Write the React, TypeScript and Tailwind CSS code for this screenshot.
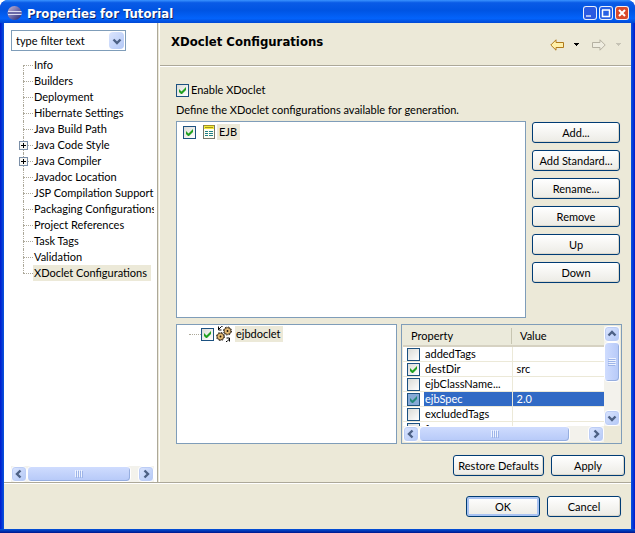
import { useState, type ReactNode } from "react";
import { clsx } from "clsx";

interface TreeItem {
  label: string;
  expandable?: boolean;
}

interface Property {
  name: string;
  value: string;
  enabled: boolean;
}

const PAGES: TreeItem[] = [
  { label: "Info" },
  { label: "Builders" },
  { label: "Deployment" },
  { label: "Hibernate Settings" },
  { label: "Java Build Path" },
  { label: "Java Code Style", expandable: true },
  { label: "Java Compiler", expandable: true },
  { label: "Javadoc Location" },
  { label: "JSP Compilation Support" },
  { label: "Packaging Configurations" },
  { label: "Project References" },
  { label: "Task Tags" },
  { label: "Validation" },
  { label: "XDoclet Configurations" },
];

const PROPERTIES: Property[] = [
  { name: "addedTags", value: "", enabled: false },
  { name: "destDir", value: "src", enabled: true },
  { name: "ejbClassName...", value: "", enabled: false },
  { name: "ejbSpec", value: "2.0", enabled: true },
  { name: "excludedTags", value: "", enabled: false },
  { name: "force", value: "", enabled: false },
];

const ACTIONS = ["Add...", "Add Standard...", "Rename...", "Remove", "Up", "Down"];

function EclipseIcon() {
  return (
    <svg width="16" height="16" viewBox="0 0 16 16" aria-hidden="true">
      <defs>
        <linearGradient id="globe" x1="0" y1="0" x2="1" y2="1">
          <stop offset="0" stopColor="#c9b9d0" />
          <stop offset="0.45" stopColor="#7775b4" />
          <stop offset="1" stopColor="#26276e" />
        </linearGradient>
      </defs>
      <circle cx="7.5" cy="8" r="7" fill="url(#globe)" />
      <path d="M1 6.500h13.500M1 9.500h13.500" stroke="#dcdcf2" />
      <path d="M1 8h14" stroke="#6a69a8" strokeWidth="2" />
    </svg>
  );
}

function Chevron({ dir }: { dir: "up" | "down" | "left" | "right" }) {
  const paths = {
    up: "M1.5 6.5L5 3L8.5 6.5",
    down: "M1.5 3.5L5 7L8.5 3.5",
    left: "M6.5 1.5L3 5L6.5 8.5",
    right: "M3.5 1.5L7 5L3.5 8.5",
  };
  return (
    <svg width="10" height="10" viewBox="0 0 10 10" aria-hidden="true">
      <path d={paths[dir]} fill="none" stroke="#4d6185" strokeWidth="2.4" />
    </svg>
  );
}

function ScrollBar({ vertical, thumb }: { vertical?: boolean; thumb: string }) {
  const arrow =
    "flex size-4 shrink-0 items-center justify-center rounded-sm border border-white bg-gradient-to-br from-[#dbe5fe] to-[#b3c8f6] shadow-[inset_0_0_0_1px_#bccdf5]";
  return (
    <div className={clsx("flex bg-[#f3f2ec]", vertical ? "w-4 flex-col" : "h-4")}>
      <button type="button" aria-label={vertical ? "Scroll up" : "Scroll left"} className={arrow}>
        <Chevron dir={vertical ? "up" : "left"} />
      </button>
      <div className="min-h-0 min-w-0 flex-1">
        <div
          className={clsx(
            "flex items-center justify-center rounded-sm border border-white from-[#cfdcfe] to-[#b6c9f8] shadow-[inset_-1px_-1px_0_#96aedf]",
            vertical ? "w-4 bg-gradient-to-r" : "h-4 bg-gradient-to-b",
            thumb,
          )}
        >
          <svg width="8" height="8" viewBox="0 0 8 8" aria-hidden="true" className={clsx(vertical && "rotate-90")}>
            <path d="M.5 0v7M2.5 0v7M4.5 0v7M6.5 0v7" stroke="#eef3ff" />
            <path d="M1.5 1v7M3.5 1v7M5.5 1v7M7.5 1v7" stroke="#9db4e8" />
          </svg>
        </div>
      </div>
      <button type="button" aria-label={vertical ? "Scroll down" : "Scroll right"} className={arrow}>
        <Chevron dir={vertical ? "down" : "right"} />
      </button>
    </div>
  );
}

function CheckBox({ label, checked, dimmed }: { label: string; checked?: boolean; dimmed?: boolean }) {
  return (
    <span className="grid size-[13px] shrink-0">
      <input
        type="checkbox"
        aria-label={label}
        defaultChecked={checked}
        className={clsx(
          "peer col-start-1 row-start-1 size-[13px] appearance-none border border-[#1c5180]",
          dimmed ? "bg-[#85a9d6]" : "bg-gradient-to-br from-[#dcdcd7] to-white",
        )}
      />
      <svg
        viewBox="0 0 13 13"
        aria-hidden="true"
        className="pointer-events-none col-start-1 row-start-1 hidden size-[13px] peer-checked:block"
      >
        <path d="M3 5v3l2 2h1l4-4V3L5.5 7.500z" fill={dimmed ? "#25887a" : "#21a121"} />
      </svg>
    </span>
  );
}

function PushButton({ children, primary, className }: { children: ReactNode; primary?: boolean; className?: string }) {
  return (
    <button
      type="button"
      className={clsx(
        "h-[21px] rounded-[3px] border border-[#003c74] bg-gradient-to-b from-white to-[#ecebe5] text-center whitespace-nowrap",
        primary
          ? "shadow-[inset_0_0_0_2px_#a9c3f2]"
          : "shadow-[inset_-1px_-1px_0_#dcd8cc,0_0_0_1px_#e8e5d9]",
        className,
      )}
    >
      {children}
    </button>
  );
}

function DocumentIcon() {
  return (
    <svg width="12" height="14" viewBox="0 0 12 14" shapeRendering="crispEdges" aria-hidden="true">
      <rect width="12" height="14" fill="#77786a" />
      <rect x="1" y="1" width="10" height="12" fill="#fffef2" />
      <rect x="1" y="0" width="10" height="4" fill="#f4ea3c" />
      <path d="M1 .5h10M2 2.500h8" stroke="#a39322" />
      <path d="M2 6.500h3M6 6.500h4M2 8.500h3M6 8.500h4M2 10.500h3M6 10.500h4" stroke="#1f7f86" />
    </svg>
  );
}

function GearsIcon() {
  return (
    <svg width="16" height="16" viewBox="0 0 16 16" aria-hidden="true">
      <g stroke="#1b1208">
        <circle cx="11.5" cy="5" r="4" fill="none" strokeDasharray="1.600 1.540" />
        <circle cx="11.5" cy="5" r="3.400" fill="#e3b871" strokeWidth=".7" />
        <circle cx="4.500" cy="10.500" r="4" fill="none" strokeDasharray="1.600 1.540" />
        <circle cx="4.500" cy="10.500" r="3.400" fill="#e3b871" strokeWidth=".7" />
      </g>
      <circle cx="11.5" cy="5" r=".9" fill="#1b1208" />
      <circle cx="4.500" cy="10.500" r=".9" fill="#1b1208" />
      <path d="M6.500 .5h-1l-2.500 2.500M2.500 .5v3.500H5.500M10 15.500h1l2.500-2.500M13.500 15.500V12H10.500" fill="none" stroke="#000" />
    </svg>
  );
}

function NavArrow({ forward }: { forward?: boolean }) {
  return (
    <svg width="14" height="12" viewBox="0 0 14 12" aria-hidden="true" className={clsx(forward && "-scale-x-100")}>
      <path
        d="M.8 6L6 .8V3.500h7.500v5H6v2.700z"
        fill={forward ? "#efede0" : "#fff0a8"}
        stroke={forward ? "#b5b1a2" : "#b07a1c"}
      />
    </svg>
  );
}

function MenuTriangle({ disabled }: { disabled?: boolean }) {
  return (
    <svg width="5" height="3" viewBox="0 0 5 3" shapeRendering="crispEdges" aria-hidden="true">
      <path d="M0 0h5v1H4v1H3v1H2V2H1V1H0z" fill={disabled ? "#c6c3b5" : "#000"} />
    </svg>
  );
}

function TitleBar() {
  const control =
    "flex size-[14px] items-center justify-center rounded-[3px] border border-white/90";
  return (
    <header className="flex h-[23px] shrink-0 items-center bg-[linear-gradient(#3a93ff_0%,#0a5be6_12%,#0054e3_45%,#0363fb_80%,#0148d4_100%)] pt-[3px] pr-[6px] pl-[7px]">
      <EclipseIcon />
      <h1 className="ml-1 flex-1 pt-px font-['DejaVu_Sans_Condensed',sans-serif] text-[13px] leading-4 font-bold text-white [text-shadow:1px_1px_0_#0a246a]">
        Properties for Tutorial
      </h1>
      <div className="flex gap-[2px]">
        <button type="button" aria-label="Minimize" className={clsx(control, "border-white/50 bg-[#2a5ae0]")}>
          <svg width="10" height="10" viewBox="0 0 10 10">
            <path d="M1 8h5" stroke="#a9bdf4" strokeWidth="2" />
          </svg>
        </button>
        <button type="button" aria-label="Maximize" className={clsx(control, "bg-[#2760e4]")}>
          <svg width="10" height="10" viewBox="0 0 10 10">
            <path d="M1.500 2v6.500h7V2M1 2h8" fill="none" stroke="#fff" strokeWidth="1.500" />
          </svg>
        </button>
        <button type="button" aria-label="Close" className={clsx(control, "bg-[#d8492a]")}>
          <svg width="10" height="10" viewBox="0 0 10 10">
            <path d="M2 2l6 6M8 2L2 8" stroke="#fff" strokeWidth="2" />
          </svg>
        </button>
      </div>
    </header>
  );
}

function Sidebar() {
  const [selected, setSelected] = useState("XDoclet Configurations");

  return (
    <nav className="flex w-[154px] shrink-0 flex-col border-r border-[#aca899] bg-white pt-[7px] pl-[7px]">
      <div className="flex h-[21px] w-[115px] items-center border border-[#7f9db9] pr-px">
        <input
          aria-label="Filter"
          defaultValue="type filter text"
          className="min-w-0 flex-1 bg-transparent pl-1 outline-none"
        />
        <button
          type="button"
          aria-label="Show filters"
          className="flex h-[17px] w-[15px] items-center justify-center rounded-sm bg-gradient-to-br from-[#dbe5fe] to-[#b3c8f6]"
        >
          <Chevron dir="down" />
        </button>
      </div>

      <ul className="mt-[6px] mr-[3px] flex-1 overflow-hidden">
        {PAGES.map((page, i) => (
          <li key={page.label} className="flex h-4 items-center">
            <span className="relative ml-2 flex h-4 w-[14px] shrink-0 items-center">
              <span
                className={clsx(
                  "absolute left-1 border-l border-dotted border-[#aca899]",
                  i === 0 ? "top-2 bottom-0" : i === PAGES.length - 1 ? "top-0 bottom-2" : "inset-y-0",
                )}
              />
              <span className="ml-1 flex-1 border-t border-dotted border-[#aca899]" />
              {page.expandable && (
                <button
                  type="button"
                  aria-label={`Expand ${page.label}`}
                  className="absolute left-0 flex size-[9px] items-center justify-center border border-[#7b8fa8] bg-[#f7f6f2]"
                >
                  <svg width="5" height="5" viewBox="0 0 5 5" shapeRendering="crispEdges">
                    <path d="M0 2.500h5M2.500 0v5" stroke="#000" />
                  </svg>
                </button>
              )}
            </span>
            <button
              type="button"
              onClick={() => setSelected(page.label)}
              className={clsx("h-4 pr-1 pl-px whitespace-nowrap", selected === page.label && "bg-[#ece9d8]")}
            >
              {page.label}
            </button>
          </li>
        ))}
      </ul>

      <div className="mr-[3px]">
        <ScrollBar thumb="w-[104px]" />
      </div>
    </nav>
  );
}

function PropertyTable() {
  return (
    <div className="flex min-h-0 min-w-0 border border-[#7f9db9] bg-[#ece9d8] p-px">
      <div className="flex min-w-0 flex-1 flex-col">
        <div className="min-h-0 flex-1 overflow-hidden bg-white">
          <table className="w-full table-fixed border-collapse text-left">
            <thead>
              <tr className="h-5 border-b-2 border-[#d6d2c2] bg-[#ebeadb]">
                <th className="w-[109px] p-0 pl-2 font-normal">
                  <span className="block border-r border-[#c7c5b2]">Property</span>
                </th>
                <th className="p-0 pl-2 font-normal">Value</th>
              </tr>
            </thead>
            <tbody>
              {PROPERTIES.map((p) => {
                const active = p.name === "ejbSpec";
                return (
                  <tr key={p.name} className="h-[15px] border-b border-[#ece9d8]">
                    <td className="border-r border-[#ece9d8] p-0">
                      <div className="flex h-[14px] items-center pl-1">
                        <CheckBox label={p.name} checked={p.enabled} dimmed={active} />
                        <span
                          className={clsx(
                            "ml-1 h-[14px] flex-1 pl-px leading-[14px]",
                            active && "bg-[#316ac5] text-white",
                          )}
                        >
                          {p.name}
                        </span>
                      </div>
                    </td>
                    <td className={clsx("p-0 pl-1 leading-[14px]", active && "bg-[#316ac5] text-white")}>{p.value}</td>
                  </tr>
                );
              })}
            </tbody>
          </table>
        </div>
        <ScrollBar thumb="w-[151px]" />
      </div>
      <div className="flex flex-col pb-4">
        <div className="flex flex-1">
          <ScrollBar vertical thumb="h-10" />
        </div>
      </div>
    </div>
  );
}

function ConfigurationPage() {
  return (
    <main className="ml-px flex min-w-0 flex-1 flex-col border-l border-white">
      <div className="flex h-[43px] shrink-0 items-center border-b border-[#aca899] pr-[10px] pl-[11px] shadow-[0_1px_0_#fff]">
        <h2 className="flex-1 pb-1 font-['DejaVu_Sans_Condensed',sans-serif] text-[13px] leading-4 font-bold">
          XDoclet Configurations
        </h2>
        <div className="flex items-center gap-[10px] pt-px">
          <button type="button" aria-label="Back">
            <NavArrow />
          </button>
          <button type="button" aria-label="Back history">
            <MenuTriangle />
          </button>
          <button type="button" aria-label="Forward" disabled className="ml-[3px]">
            <NavArrow forward />
          </button>
          <button type="button" aria-label="Forward history" disabled>
            <MenuTriangle disabled />
          </button>
        </div>
      </div>

      <div className="flex min-h-0 flex-1 flex-col pt-4 pb-[6px] pl-4">
        <label className="flex h-4 items-center gap-[2px]">
          <CheckBox label="Enable XDoclet" checked />
          <span>Enable XDoclet</span>
        </label>
        <p className="mt-1 h-[19px] leading-4">Define the XDoclet configurations available for generation.</p>

        <div className="flex min-h-0 flex-1 gap-[6px] pr-[11px]">
          <div className="min-w-0 flex-1 border border-[#7f9db9] bg-white pt-[2px] pl-[6px]">
            <label className="flex h-4 items-center">
              <CheckBox label="EJB" checked />
              <span className="ml-[7px]">
                <DocumentIcon />
              </span>
              <span className="ml-[2px] h-4 bg-[#ece9d8] pr-[3px] pl-[2px]">EJB</span>
            </label>
          </div>
          <div className="flex w-[88px] flex-col gap-[7px] pt-px">
            {ACTIONS.map((action) => (
              <PushButton key={action}>{action}</PushButton>
            ))}
          </div>
        </div>

        <div className="mt-[6px] grid h-[120px] shrink-0 grid-cols-2 grid-rows-1 gap-1 pr-[9px]">
          <div className="min-w-0 border border-[#7f9db9] bg-white pt-px pl-3">
            <label className="flex h-4 items-center">
              <span className="w-3 border-t border-dotted border-[#aca899]" />
              <CheckBox label="ejbdoclet" checked />
              <span className="ml-[2px]">
                <GearsIcon />
              </span>
              <span className="ml-[3px] h-4 bg-[#ece9d8] pr-[2px] pl-px">ejbdoclet</span>
            </label>
          </div>
          <PropertyTable />
        </div>

        <div className="mt-[11px] flex justify-end gap-[7px] pr-[6px]">
          <PushButton className="w-[91px]">Restore Defaults</PushButton>
          <PushButton className="w-[74px]">Apply</PushButton>
        </div>
      </div>
    </main>
  );
}

export default function App() {
  return (
    <div className="flex h-screen min-h-[480px] flex-col overflow-hidden rounded-t-lg bg-[linear-gradient(90deg,#0019cf,#0855dd_4px,#0855dd_calc(100%-4px),#0019cf)] font-[Lato,sans-serif] text-[11px] leading-4 text-black">
      <TitleBar />
      <div className="mx-1 flex min-h-0 flex-1 flex-col bg-[#ece9d8]">
        <div className="flex min-h-0 flex-1 border-b border-[#aca899]">
          <Sidebar />
          <ConfigurationPage />
        </div>
        <footer className="flex h-[46px] shrink-0 justify-end gap-[7px] border-t border-white pt-3 pr-[10px]">
          <PushButton primary className="w-[74px]">
            OK
          </PushButton>
          <PushButton className="w-[74px]">Cancel</PushButton>
        </footer>
      </div>
      <div className="h-1 shrink-0 bg-gradient-to-b from-[#0855dd] to-[#00138c]" />
    </div>
  );
}
